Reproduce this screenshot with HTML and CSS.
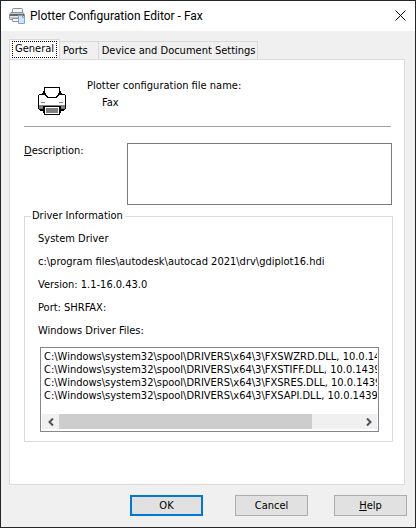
FILE: index.html
```html
<!DOCTYPE html>
<html lang="en">
<head>
<meta charset="utf-8">
<title>Plotter Configuration Editor - Fax</title>
<link rel="stylesheet" href="styles.css">
</head>
<body>
<main class="dialog">
  <header class="titlebar">
    <svg class="app-icon" width="16" height="16" viewBox="0 0 16 16" aria-hidden="true">
      <path d="M3.500 5V1.500q0-1 1-1h8q1 0 1 1V5" fill="#f4f6f8" stroke="#858b92"/>
      <path d="M2 4.500h12l1.500 2v4q0 1-1 1h-13q-1 0-1-1v-4z" fill="#c3c8cd" stroke="#8b9198"/>
      <path d="M1 6h14v2H1z" fill="#626971"/>
      <path d="M1 8h14v1H1z" fill="#e6e9ec"/>
      <path d="M3.500 10.500h8v3h-8z" fill="#f7f9fb" stroke="#8b929a"/>
      <path d="M9.500 7.500h4l2 2v6h-6z" fill="#cfe4f7" stroke="#7fa6cb"/>
      <path d="M13.500 7.500v2h2" fill="#fff" stroke="#7fa6cb"/>
    </svg>
    <h1 class="title">Plotter Configuration Editor - Fax</h1>
    <button class="close" type="button" aria-label="Close">
      <svg width="11" height="11" viewBox="0 0 11 11"><path d="M.5.5l10 10M10.500.5l-10 10" stroke="#000" fill="none"/></svg>
    </button>
  </header>

  <div class="content">
    <div class="tabs" role="tablist">
      <button class="tab active" type="button" role="tab" aria-selected="true"><span class="focus">General</span></button>
      <button class="tab" type="button" role="tab">Ports</button>
      <button class="tab" type="button" role="tab">Device and Document Settings</button>
    </div>

    <section class="panel" role="tabpanel">
      <div class="summary">
        <svg class="printer" width="28" height="28" viewBox="0 0 28 28" shape-rendering="crispEdges" aria-hidden="true">
          <path d="M1 7h26v1h1v14h-1v1h-1v1h-3v2h-1v2H6v-2H5v-2H2v-1H1v-1H0V8h1z" fill="#000"/>
          <path d="M1 8h26v10H1z" fill="#fff"/>
          <path d="M1 18h26v4H1z" fill="#808080"/>
          <path d="M3 15h4v1H3zM21 15h4v1h-4z" fill="#808080"/>
          <path d="M6 0h16v4h1v2h1v2h-3v1h-1v1h-1v1H9v-1H8V9H7V8H4V6h1V4h1z" fill="#000"/>
          <path d="M7 1h14v5h-1v2h-1v1h-1v1h-8V9H9V8H8V6H7z" fill="#fff"/>
          <path d="M5 19h18v4H5z" fill="#000"/>
          <path d="M7 20h14v7H7z" fill="#fff"/>
          <path d="M8 21h12v5H8z" fill="#808080"/>
        </svg>
        <div>
          <p class="line">Plotter configuration file name:</p>
          <p class="line file">Fax</p>
        </div>
      </div>
      <hr class="rule">

      <div class="description">
        <label for="desc"><u>D</u>escription:</label>
        <textarea id="desc"></textarea>
      </div>

      <fieldset class="driver">
        <legend>Driver Information</legend>
        <p class="info">System Driver</p>
        <p class="info">c:\program files\autodesk\autocad 2021\drv\gdiplot16.hdi</p>
        <p class="info">Version: 1.1-16.0.43.0</p>
        <p class="info">Port: SHRFAX:</p>
        <p class="info" id="files-label">Windows Driver Files:</p>
        <div class="listbox">
          <ul class="files" aria-labelledby="files-label">
            <li>C:\Windows\system32\spool\DRIVERS\x64\3\FXSWZRD.DLL, 10.0.14</li>
            <li>C:\Windows\system32\spool\DRIVERS\x64\3\FXSTIFF.DLL, 10.0.1439</li>
            <li>C:\Windows\system32\spool\DRIVERS\x64\3\FXSRES.DLL, 10.0.1439</li>
            <li>C:\Windows\system32\spool\DRIVERS\x64\3\FXSAPI.DLL, 10.0.1439</li>
          </ul>
          <div class="scrollbar">
            <button class="arrow" type="button" aria-label="Scroll left"><svg width="6" height="8" viewBox="0 0 6 8"><path d="M5 .5L1.500 4 5 7.500" fill="none" stroke="#505050" stroke-width="2"/></svg></button>
            <div class="track"><div class="thumb"></div></div>
            <button class="arrow" type="button" aria-label="Scroll right"><svg width="6" height="8" viewBox="0 0 6 8"><path d="M1 .5L4.500 4 1 7.500" fill="none" stroke="#505050" stroke-width="2"/></svg></button>
          </div>
        </div>
      </fieldset>
    </section>
  </div>

  <footer class="actions">
    <button class="action primary" type="button">OK</button>
    <button class="action cancel" type="button">Cancel</button>
    <button class="action" type="button"><u>H</u>elp</button>
  </footer>
</main>
</body>
</html>
```

FILE: styles.css
```css
* {
  box-sizing: border-box;
}

body {
  margin: 0;
  font: 11px/14px Tahoma, "DejaVu Sans Condensed", "Noto Sans", sans-serif;
  color: #000;
}

button {
  margin: 0;
  padding: 0;
  border: 0;
  font: inherit;
  color: inherit;
}

p {
  margin: 0;
}

u {
  text-underline-offset: 1px;
}

.dialog {
  display: flex;
  flex-direction: column;
  min-height: 100vh;
  border: 1px solid #23262b;
  background: #f0f0f0;
}

.titlebar {
  display: flex;
  align-items: center;
  height: 30px;
  padding: 0 9px 0 8px;
  background: #fff;
}

.title {
  flex: 1;
  margin: 0 0 0 5px;
  font: 12px/16px "Segoe UI", Roboto, sans-serif;
}

.close {
  display: flex;
  margin-bottom: 2px;
  background: none;
}

.content {
  display: flex;
  flex: 1;
  flex-direction: column;
  padding: 8px 10px 0 8px;
}

.tabs {
  display: flex;
  align-items: flex-end;
}

.tab {
  height: 18px;
  padding: 0 1px 0 3px;
  border: 1px solid #d9d9d9;
  border-width: 1px 1px 0 0;
  background: #f0f0f0;
}

.tab:nth-child(2) {
  padding-right: 10px;
}

.tab.active {
  height: 21px;
  margin-bottom: -1px;
  padding: 1px 2px 2px;
  border-left-width: 1px;
  background: #fff;
}

.focus {
  display: block;
  height: 17px;
  padding: 0 2px;
  border: 1px dotted #000;
  line-height: 13px;
}

.panel {
  flex: 1;
  padding: 17px 11px 20px 14px;
  border: 1px solid #d9d9d9;
  background: #fff;
}

.summary {
  display: flex;
  gap: 21px;
  padding: 0 14px;
}

.printer {
  flex: none;
  margin-top: 10px;
}

.line {
  line-height: 17px;
}

.file {
  padding-left: 15px;
}

.rule {
  margin: 11px 2px 16px 0;
  border: 0;
  border-top: 1px solid #a0a0a0;
}

.description {
  display: flex;
  justify-content: space-between;
  padding-right: 1px;
}

.description label {
  padding-top: 1px;
}

.description textarea {
  width: 72%;
  height: 62px;
  margin: 0;
  border: 1px solid #7a7a7a;
  border-radius: 0;
  background: #fff;
  font: inherit;
  resize: none;
}

.driver {
  min-width: 0;
  margin: 4px 0 0;
  padding: 4px 13px 9px;
  border: 1px solid #dcdcdc;
}

.driver legend {
  margin-left: -7px;
  padding: 0 2px 0 1px;
}

.info {
  line-height: 23px;
}

.listbox {
  margin: 5px 0 0 2px;
  padding: 2px 1px;
  border: 1px solid #828790;
}

.files {
  height: 64px;
  margin: 0;
  padding: 0 0 0 2px;
  overflow: hidden;
  list-style: none;
  line-height: 13px;
  white-space: nowrap;
}

.scrollbar {
  display: flex;
  height: 15px;
  background: #f0f0f0;
}

.arrow {
  display: flex;
  flex: none;
  align-items: center;
  justify-content: center;
  width: 17px;
  background: #f0f0f0;
}

.track {
  flex: 1;
}

.thumb {
  width: 84%;
  height: 100%;
  background: #cdcdcd;
}

.actions {
  display: flex;
  justify-content: flex-end;
  padding: 10px 8px 11px;
}

.action {
  width: 73px;
  height: 21px;
  border: 1px solid #adadad;
  background: #e1e1e1;
}

.action.primary {
  border: 2px solid #0078d7;
}

.cancel {
  margin: 0 26px 0 32px;
}
```
